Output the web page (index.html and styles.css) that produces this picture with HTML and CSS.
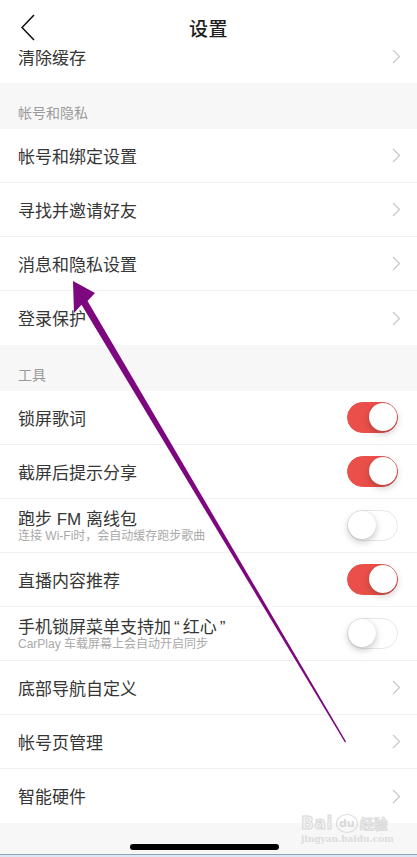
FILE: index.html
```html
<!DOCTYPE html>
<html lang="zh">
<head>
<meta charset="utf-8">
<title>设置</title>
<link rel="stylesheet" href="styles.css">
</head>
<body>
<div class="screen">
  <header class="nav">
    <svg class="back" width="14" height="28" viewBox="0 0 14 28"><polyline points="13,1 1,13.5 13,26" fill="none" stroke="#111" stroke-width="1.6"/></svg>
    <h1 class="title">设置</h1>
  </header>

  <div class="list">
    <div class="row partial"><span class="label">清除缓存</span><svg class="chev" width="9" height="15" viewBox="0 0 9 15"><polyline points="1,1 7.5,7.5 1,14" fill="none" stroke="#c9c9c9" stroke-width="1.3"/></svg></div>
  </div>

  <div class="section">帐号和隐私</div>
  <div class="list">
    <div class="row"><span class="label">帐号和绑定设置</span><svg class="chev" width="9" height="15" viewBox="0 0 9 15"><polyline points="1,1 7.5,7.5 1,14" fill="none" stroke="#c9c9c9" stroke-width="1.3"/></svg></div>
    <div class="row"><span class="label">寻找并邀请好友</span><svg class="chev" width="9" height="15" viewBox="0 0 9 15"><polyline points="1,1 7.5,7.5 1,14" fill="none" stroke="#c9c9c9" stroke-width="1.3"/></svg></div>
    <div class="row"><span class="label">消息和隐私设置</span><svg class="chev" width="9" height="15" viewBox="0 0 9 15"><polyline points="1,1 7.5,7.5 1,14" fill="none" stroke="#c9c9c9" stroke-width="1.3"/></svg></div>
    <div class="row"><span class="label">登录保护</span><svg class="chev" width="9" height="15" viewBox="0 0 9 15"><polyline points="1,1 7.5,7.5 1,14" fill="none" stroke="#c9c9c9" stroke-width="1.3"/></svg></div>
  </div>

  <div class="section">工具</div>
  <div class="list">
    <div class="row"><span class="label">锁屏歌词</span><span class="toggle on"><span class="knob"></span></span></div>
    <div class="row"><span class="label">截屏后提示分享</span><span class="toggle on"><span class="knob"></span></span></div>
    <div class="row"><div class="texts"><span class="label">跑步 FM 离线包</span><span class="sub">连接 Wi-Fi时，会自动缓存跑步歌曲</span></div><span class="toggle"><span class="knob"></span></span></div>
    <div class="row"><span class="label">直播内容推荐</span><span class="toggle on"><span class="knob"></span></span></div>
    <div class="row"><div class="texts"><span class="label">手机锁屏菜单支持加<span class="q">“</span>红心<span class="q">”</span></span><span class="sub">CarPlay 车载屏幕上会自动开启同步</span></div><span class="toggle"><span class="knob"></span></span></div>
    <div class="row"><span class="label">底部导航自定义</span><svg class="chev" width="9" height="15" viewBox="0 0 9 15"><polyline points="1,1 7.5,7.5 1,14" fill="none" stroke="#c9c9c9" stroke-width="1.3"/></svg></div>
    <div class="row"><span class="label">帐号页管理</span><svg class="chev" width="9" height="15" viewBox="0 0 9 15"><polyline points="1,1 7.5,7.5 1,14" fill="none" stroke="#c9c9c9" stroke-width="1.3"/></svg></div>
    <div class="row"><span class="label">智能硬件</span><svg class="chev" width="9" height="15" viewBox="0 0 9 15"><polyline points="1,1 7.5,7.5 1,14" fill="none" stroke="#c9c9c9" stroke-width="1.3"/></svg></div>
  </div>

  <div class="footer"><span class="homebar"></span></div>
  <div class="edge"></div>

  <div class="watermark">
    <div class="wm-top"><span class="wm-bai">Bai</span><span class="wm-du">du</span><span class="wm-jy">经验</span></div>
    <div class="wm-url">jingyan.baidu.com</div>
  </div>

  <svg class="annot" width="417" height="857" viewBox="0 0 417 857">
    <polygon points="73,281 95,293 87.5,301 346,741.6 345,742.4 81.5,304.8 74,313" fill="#7d077f"/>
  </svg>
</div>
</body>
</html>
```

FILE: styles.css
```css
* { box-sizing: border-box; }
html, body { margin: 0; padding: 0; }
body {
  background: #f7f7f7;
  font-family: "Noto Sans CJK SC", "Noto Sans", sans-serif;
  color: #333;
}
.screen {
  position: relative;
  width: 417px;
  height: 857px;
  overflow: hidden;
  background: #f7f7f7;
}
.nav {
  height: 50px;
  padding-top: 6px;
  background: #fff;
  display: flex;
  align-items: center;
  justify-content: center;
  position: relative;
}
.back {
  position: absolute;
  left: 21px;
  top: 14px;
}
.title {
  margin: 0;
  font-size: 19px;
  font-weight: 500;
  color: #1e1e1e;
  line-height: 44px;
  letter-spacing: 0.5px;
}
.list { background: #fff; }
.row {
  height: 54px;
  display: flex;
  align-items: center;
  justify-content: space-between;
  padding: 0 17px 0 18px;
  border-bottom: 1px solid #f1f1f1;
}
.row:last-child { border-bottom: none; }
.row.partial {
  height: 33px;
  padding-bottom: 20px;
}
.label {
  font-size: 17px;
  line-height: 20px;
  color: #363636;
  white-space: nowrap;
}
.texts {
  display: flex;
  flex-direction: column;
  padding-top: 3px;
  font-family: "Liberation Sans", "Noto Sans CJK SC", sans-serif;
}
.texts .label {
  line-height: 19px;
}
.texts .q {
  padding: 0 3px;
}
.texts .sub {
  font-size: 12px;
  line-height: 15px;
  color: #a9a9a9;
  white-space: nowrap;
}
.chev { flex: none; margin-right: -1px; }
.section {
  height: 46px;
  display: flex;
  align-items: flex-end;
  padding: 0 18px 7px;
  font-size: 14px;
  line-height: 20px;
  color: #9a9a9a;
}
.toggle {
  flex: none;
  width: 51px;
  height: 31px;
  border-radius: 16px;
  background: #fff;
  border: 1.5px solid #e7e7e7;
  position: relative;
  margin-right: 2px;
}
.toggle .knob {
  position: absolute;
  top: 0;
  left: 0;
  width: 28px;
  height: 28px;
  border-radius: 50%;
  background: #fff;
  box-shadow: 0 3px 7px rgba(0,0,0,0.22), 0 0 1px rgba(0,0,0,0.15);
}
.toggle.on {
  background: #ea5049;
  border-color: #ea5049;
}
.toggle.on .knob {
  left: auto;
  right: 0;
  box-shadow: 0 3px 7px rgba(0,0,0,0.22), 0 0 1px rgba(0,0,0,0.2);
}
.footer {
  height: 31px;
  padding-top: 21px;
  display: flex;
  justify-content: center;
  align-items: flex-start;
}
.homebar {
  width: 149px;
  height: 6px;
  border-radius: 3px;
  background: #000;
  margin-left: -8px;
}
.edge {
  height: 3px;
  border-top: 1px solid #8fa3b8;
  background: #dce8f4;
}
.watermark {
  position: absolute;
  left: 301px;
  top: 812px;
  width: 92px;
  color: #e2e2e2;
  opacity: 0.9;
  font-family: "DejaVu Sans", sans-serif;
}
.wm-top {
  display: flex;
  align-items: center;
  height: 22px;
}
.wm-bai {
  font-size: 17px;
  font-weight: bold;
  color: #f2f2f2;
  -webkit-text-stroke: 1px #d6d6d6;
  letter-spacing: 0.5px;
}
.wm-du {
  width: 22px;
  height: 19px;
  border-radius: 50%;
  border: 1.5px solid #d8d8d8;
  font-size: 11px;
  font-weight: bold;
  color: #d6d6d6;
  display: flex;
  align-items: center;
  justify-content: center;
  margin: 0 2px 0 3px;
}
.wm-jy {
  font-family: "Noto Sans CJK SC", sans-serif;
  font-size: 14px;
  font-weight: bold;
  color: #f0f0f0;
  -webkit-text-stroke: 0.8px #d6d6d6;
}
.wm-url {
  font-size: 9px;
  line-height: 11px;
  color: #dadada;
  font-family: "DejaVu Serif", serif;
  font-weight: bold;
}
.annot {
  position: absolute;
  left: 0;
  top: 0;
  pointer-events: none;
}
```
